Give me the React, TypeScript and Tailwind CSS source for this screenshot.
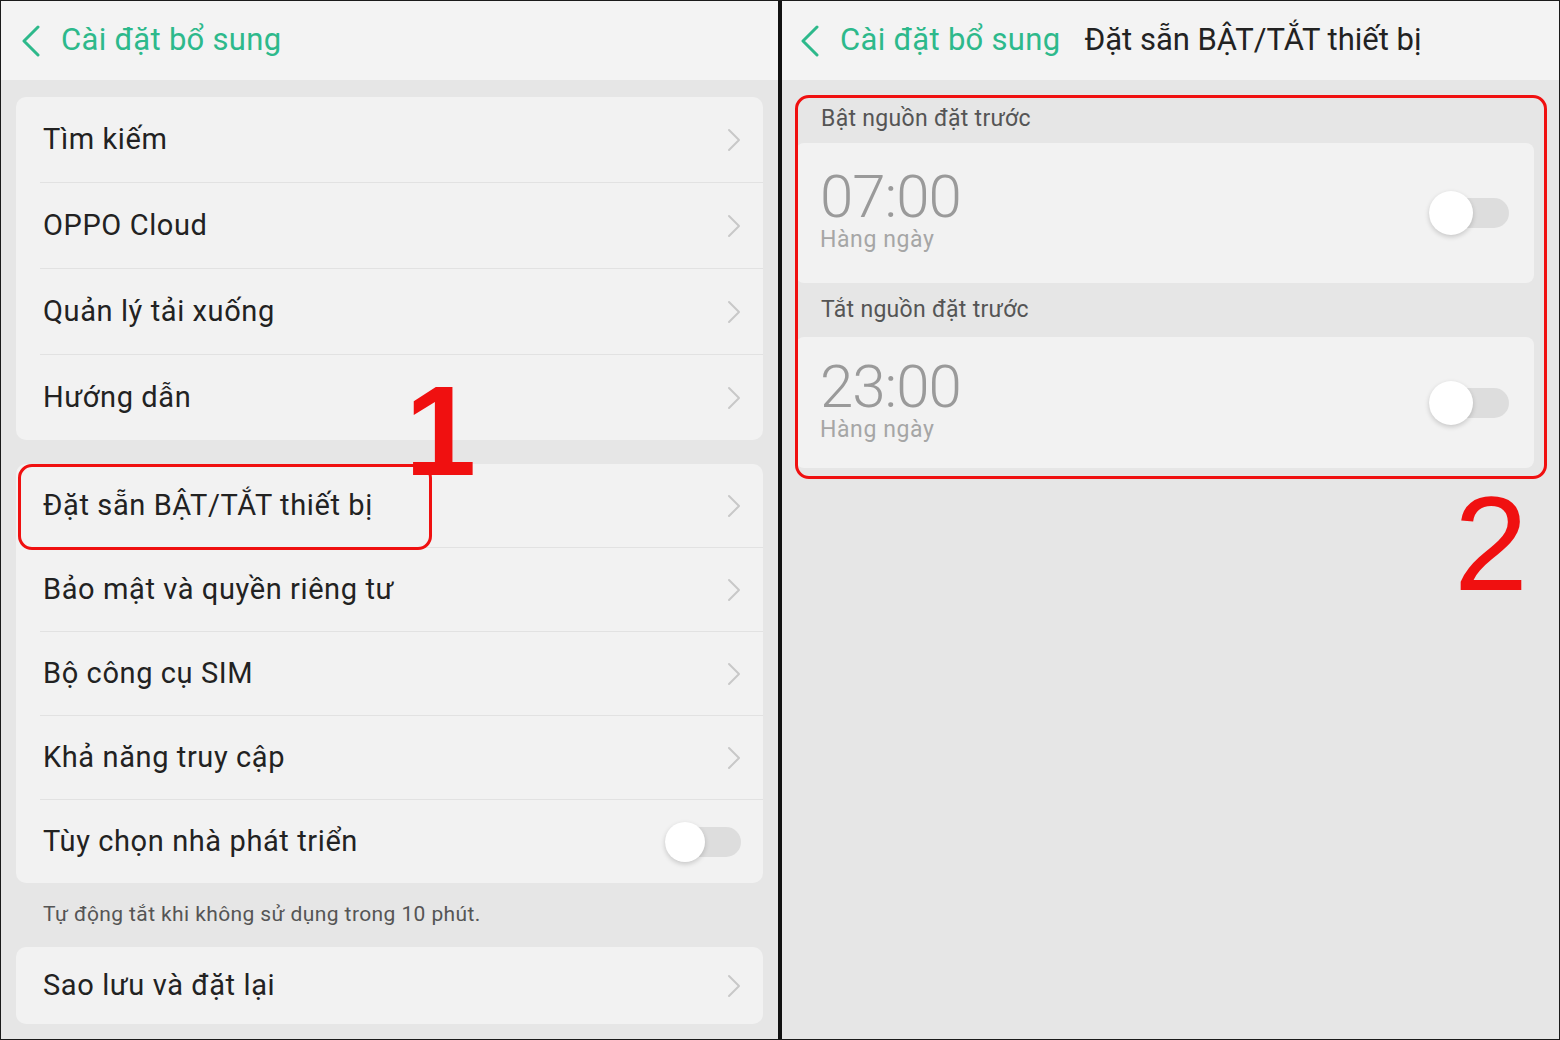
import { Fragment } from "react";

const font = { fontFamily: "Roboto, 'Noto Sans', sans-serif" };

function Chevron() {
  return (
    <svg width="14" height="24" viewBox="0 0 14 24" fill="none" className="shrink-0">
      <path d="M2 2 L12 12 L2 22" stroke="#c8c8c8" strokeWidth="2" strokeLinecap="round" strokeLinejoin="round" />
    </svg>
  );
}

function BackChevron() {
  return (
    <svg width="20" height="32" viewBox="0 0 20 32" fill="none" className="shrink-0">
      <path d="M17 2 L3 16 L17 30" stroke="#2db98b" strokeWidth="3" strokeLinecap="round" strokeLinejoin="round" />
    </svg>
  );
}

function Toggle({ big = false }: { big?: boolean }) {
  return (
    <div className={big ? "relative w-[80px] h-[30px] rounded-full bg-[#dddddd]" : "relative w-[76px] h-[30px] rounded-full bg-[#dddddd]"}>
      <div
        className={
          big
            ? "absolute left-0 top-1/2 -translate-y-1/2 w-[44px] h-[44px] rounded-full bg-white shadow-[0_2px_5px_rgba(0,0,0,0.18)]"
            : "absolute left-0 top-1/2 -translate-y-1/2 w-[40px] h-[40px] rounded-full bg-white shadow-[0_2px_5px_rgba(0,0,0,0.18)]"
        }
      />
    </div>
  );
}

type Row = { label: string; toggle?: boolean };

function Card({ rows, rowH }: { rows: Row[]; rowH: string }) {
  return (
    <div className="rounded-[10px] bg-[#f2f2f2]">
      {rows.map((r, i) => (
        <Fragment key={r.label}>
          {i > 0 && <div className="ml-[24px] h-px bg-[#e2e2e2]" />}
          <div className={`${rowH} flex items-center justify-between pl-[27px] pr-[22px]`}>
            <span className="text-[29px] tracking-[0.6px] text-[#222222]">{r.label}</span>
            {r.toggle ? <Toggle /> : <Chevron />}
          </div>
        </Fragment>
      ))}
    </div>
  );
}

function TimeCard({ time, h }: { time: string; h: string }) {
  return (
    <div className={`${h} rounded-[8px] bg-[#f2f2f2] flex items-center justify-between pl-[24px] pr-[25px]`}>
      <div className="flex flex-col -mt-[8px]">
        <span className="text-[60px] leading-[62px] font-light text-[#9a9a9a] tracking-[-1px]">{time}</span>
        <span className="text-[23px] leading-[24px] text-[#a6a6a6] tracking-[0.6px]">Hàng ngày</span>
      </div>
      <Toggle big />
    </div>
  );
}

export default function App() {
  return (
    <div className="relative w-[1560px] h-[1040px] flex bg-[#1a1a1a] p-[1px] overflow-hidden" style={font}>
      {/* left panel */}
      <div className="w-[777px] flex flex-col bg-[#e6e6e6]">
        <div className="h-[79px] bg-[#f3f3f3] flex items-center gap-[20px] pl-[20px]">
          <BackChevron />
          <span className="text-[31px] tracking-[0.3px] text-[#2db98b]">Cài đặt bổ sung</span>
        </div>
        <div className="flex flex-col pl-[15px] pr-[15px] pt-[17px]">
          <Card
            rowH="h-[85px]"
            rows={[{ label: "Tìm kiếm" }, { label: "OPPO Cloud" }, { label: "Quản lý tải xuống" }, { label: "Hướng dẫn" }]}
          />
          <div className="h-[24px]" />
          <Card
            rowH="h-[83px]"
            rows={[
              { label: "Đặt sẵn BẬT/TẮT thiết bị" },
              { label: "Bảo mật và quyền riêng tư" },
              { label: "Bộ công cụ SIM" },
              { label: "Khả năng truy cập" },
              { label: "Tùy chọn nhà phát triển", toggle: true },
            ]}
          />
          <div className="h-[64px] flex items-center pl-[27px] text-[21px] tracking-[0.4px] text-[#555555]">
            Tự động tắt khi không sử dụng trong 10 phút.
          </div>
          <Card rowH="h-[77px]" rows={[{ label: "Sao lưu và đặt lại" }]} />
        </div>
      </div>

      <div className="w-[4px] bg-[#111111]" />

      {/* right panel */}
      <div className="flex-1 flex flex-col bg-[#e6e6e6]">
        <div className="h-[79px] bg-[#f3f3f3] flex items-center pl-[18px]">
          <BackChevron />
          <span className="ml-[20px] text-[31px] tracking-[0.3px] text-[#2db98b]">Cài đặt bổ sung</span>
          <span className="ml-[24px] text-[31px] tracking-[0px] text-[#222222]">Đặt sẵn BẬT/TẮT thiết bị</span>
        </div>
        <div className="flex flex-col pl-[14px] pr-[25px] pt-[15px]">
          <div className="h-[48px] flex items-center pl-[25px] text-[23px] text-[#555555] tracking-[0.3px]">Bật nguồn đặt trước</div>
          <TimeCard time="07:00" h="h-[140px]" />
          <div className="h-[54px] flex items-center pl-[25px] text-[23px] text-[#555555] tracking-[0.3px]">Tắt nguồn đặt trước</div>
          <TimeCard time="23:00" h="h-[131px]" />
        </div>
      </div>

      {/* annotations */}
      <div className="absolute left-[18px] top-[464px] w-[414px] h-[86px] rounded-[14px] border-[3px] border-[#f01010]" />
      <div
        className="absolute left-[405px] top-[367px] text-[128px] leading-none font-bold text-[#f01010]"
        style={{ fontFamily: "'Liberation Sans', Arial, sans-serif" }}
      >
        1
      </div>
      <div className="absolute left-[795px] top-[95px] w-[752px] h-[384px] rounded-[14px] border-[3px] border-[#f01010]" />
      <div
        className="absolute left-[1454px] top-[478px] text-[133px] leading-none text-[#f01010]"
        style={{ fontFamily: "'Liberation Sans', Arial, sans-serif" }}
      >
        2
      </div>
    </div>
  );
}
